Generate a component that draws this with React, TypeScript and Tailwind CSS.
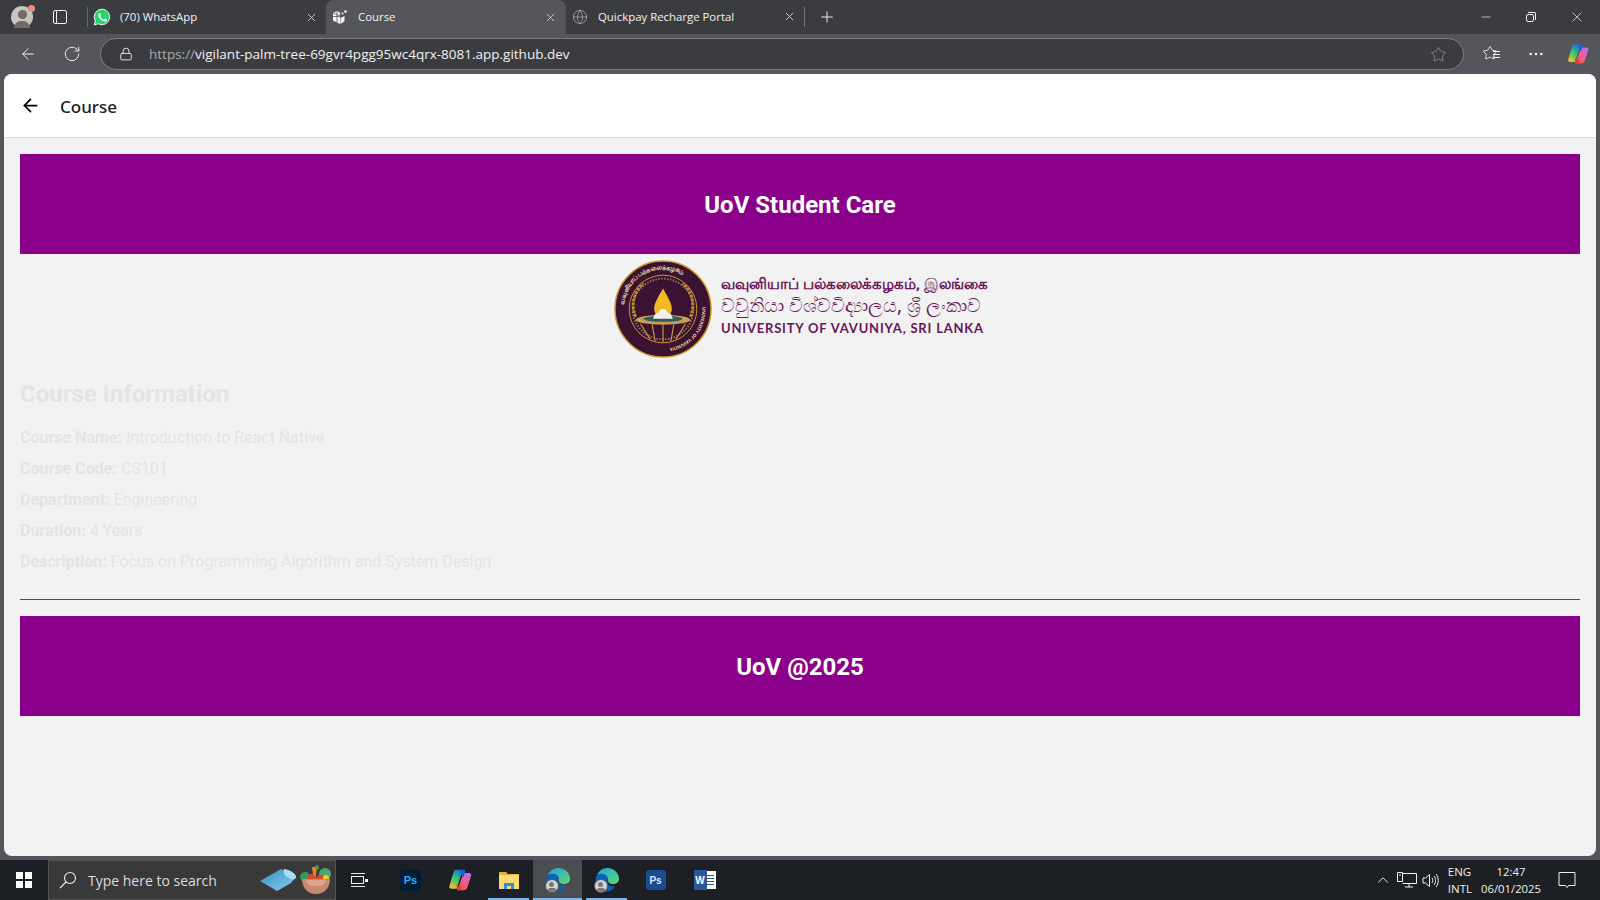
import React from "react";
import { ArrowLeft, RotateCw, Lock, Star, MoreHorizontal, Plus, X, Minus, Globe, ChevronUp } from "lucide-react";

const Segoe = "font-['Open_Sans','Noto_Sans',sans-serif]";

const WhatsAppIcon = () => (
  <svg width="18" height="18" viewBox="0 0 24 24">
    <path d="M12 1.500a10.400 10.400 0 0 0-8.900 15.800L1.600 22.500l5.400-1.400A10.400 10.400 0 1 0 12 1.500z" fill="#25d366" stroke="#fff" strokeWidth="1.200" />
    <path d="M8.600 6.800c-.3 0-.7.1-1 .5-.4.4-1.200 1.200-1.200 2.800s1.200 3.300 1.400 3.500c.2.200 2.400 3.700 5.800 5 2.800 1.100 3.400.9 4 .8.600-.1 2-.8 2.200-1.600.3-.8.300-1.500.2-1.600l-2.600-1.400c-.3-.1-.6-.2-.8.200l-1.100 1.400c-.2.200-.4.300-.8.100-2.100-1-3.500-1.800-4.900-4.200-.2-.4 0-.6.200-.8l.9-1.200c.1-.2.1-.4 0-.6L9.700 7.300c-.3-.5-.6-.5-1.100-.5z" fill="#fff" transform="translate(1.500 1.200) scale(.86)" />
  </svg>
);

const CodespaceIcon = () => (
  <svg width="16" height="16" viewBox="0 0 16 16">
    <path d="M1 4l4-2 3 1.500V15l-3-1.500-4-2z" fill="#f5f5f5" />
    <path d="M5 2v12M1 7.500l7 0M1 4l7 3" stroke="#555" strokeWidth=".8" fill="none" />
    <path d="M8.500 9l4-2v5l-4 3z" fill="#f5f5f5" />
    <circle cx="13.500" cy="2.500" r="1.300" fill="#f5f5f5" />
    <circle cx="10.500" cy="4.500" r="1" fill="#f5f5f5" />
  </svg>
);

const CopilotIcon = ({ size = 24, id }: { size?: number; id: string }) => (
  <svg width={size} height={size} viewBox="0 0 24 24">
    <defs>
      <linearGradient id={`${id}A`} x1="0.700" y1="0" x2="0.200" y2="1">
        <stop offset="0" stopColor="#1b6fe0" />
        <stop offset=".45" stopColor="#35c46a" />
        <stop offset="1" stopColor="#f7c62c" />
      </linearGradient>
      <linearGradient id={`${id}B`} x1="0.800" y1="0" x2="0.200" y2="1">
        <stop offset="0" stopColor="#b86cf0" />
        <stop offset=".55" stopColor="#f0608a" />
        <stop offset="1" stopColor="#f0503c" />
      </linearGradient>
    </defs>
    <path d="M8 2.500h6.500L9 20H4.500Q1.500 20 2.300 17.300L6 5Q6.600 2.500 8 2.500z" fill={`url(#${id}A)`} />
    <path d="M16 5.500h4Q23 5.500 22.200 8.300L18.500 19.500Q17.800 21.500 15.500 21.500H9.500L15 6.500Q15.300 5.500 16 5.500z" fill={`url(#${id}B)`} />
    <path d="M12.500 2.500h3Q17.300 2.500 16.800 4.300L15.300 9.500 13.200 6.500z" fill="#1d5fd6" />
    <path d="M8.800 15.500l2.200 2.500h2.500L12.700 20.500Q12.200 22 10.500 21.700 9 21.400 9 20z" fill="#e83a3a" />
  </svg>
);

const EdgeIcon = ({ id }: { id: string }) => (
  <div className="relative h-[26px] w-[26px]">
    <svg width="26" height="26" viewBox="0 0 26 26">
      <defs>
        <linearGradient id={id} x1="0" y1="0" x2="1" y2="1">
          <stop offset="0" stopColor="#1f9fe0" />
          <stop offset="1" stopColor="#5fdc6e" />
        </linearGradient>
      </defs>
      <path d="M3 8C5 3.500 9 1 13.500 1 20 1 25 6 25 12c0 3.500-3 5-6 5-3.500 0-5-1.500-5-3.500 0-2.500-2-5-5.500-5C6 8.500 4.500 8.500 3 8z" fill={`url(#${id})`} />
      <path d="M3 8c3-2 9-2 10.500 2 1 3-1 5 1 8 1.500 2 5 1.500 7 .5-2 4-6 6.500-10 6-6-.5-10-6-10-11C1.500 11 2 9.500 3 8z" fill="#0c62b0" />
    </svg>
    <div className="absolute bottom-0 left-0 flex h-[14px] w-[14px] flex-col items-center overflow-hidden rounded-full border border-[#555] bg-[#d4d4d4]">
      <div className="mt-[2px] h-[5px] w-[5px] rounded-full bg-[#777]" />
      <div className="mt-[1px] h-[5px] w-[10px] rounded-t-full bg-[#777]" />
    </div>
  </div>
);

const PsIcon = ({ dark }: { dark?: boolean }) => (
  <div
    className={
      dark
        ? "flex h-[21px] w-[21px] items-center justify-center rounded-[3px] bg-[#001d34] font-['Liberation_Sans',sans-serif] text-[11px] font-bold text-[#31a8ff]"
        : "flex h-[20px] w-[20px] items-center justify-center rounded-[2px] bg-[#1c4a8f] font-['Liberation_Sans',sans-serif] text-[10px] font-bold text-[#d8e6f8]"
    }
  >
    Ps
  </div>
);

const FolderIcon = () => (
  <svg width="22" height="20" viewBox="0 0 22 20">
    <path d="M1 2h7l2 2h11v15H1z" fill="#e9ae2c" />
    <path d="M1 5h20v14H1z" fill="#ffdc73" />
    <path d="M6 19v-6h10v6z" fill="#2f8fd8" />
    <path d="M9 19v-3h4v3z" fill="#ffdc73" />
  </svg>
);

const WordIcon = () => (
  <div className="relative flex h-[20px] w-[22px] items-center justify-end">
    <div className="flex h-[18px] w-[14px] flex-col justify-center gap-[2px] bg-white pl-[4px] pr-[2px]">
      <div className="h-[1px] bg-[#2b579a]" />
      <div className="h-[1px] bg-[#2b579a]" />
      <div className="h-[1px] bg-[#2b579a]" />
      <div className="h-[1px] bg-[#2b579a]" />
    </div>
    <div className="absolute left-0 top-0 flex h-[20px] w-[13px] items-center justify-center bg-[#2b579a] font-['Liberation_Sans',sans-serif] text-[10px] font-bold text-white">
      W
    </div>
  </div>
);

const YogaMat = () => (
  <svg width="38" height="24" viewBox="0 0 38 24">
    <defs>
      <linearGradient id="mat" x1="0" y1="0" x2="1" y2="1">
        <stop offset="0" stopColor="#2f8fc4" />
        <stop offset="1" stopColor="#8fd0ee" />
      </linearGradient>
    </defs>
    <path d="M1 13L22 1l15 7-5 7-14 8z" fill="url(#mat)" />
    <path d="M25 1c4 0 12 4 12 8 0 3-4 3-7 1-3-1-7-5-5-9z" fill="#a9dcf2" />
  </svg>
);

const VegBowl = () => (
  <svg width="32" height="30" viewBox="0 0 32 30">
    <circle cx="5" cy="12" r="5" fill="#2f9a5a" />
    <circle cx="25" cy="9" r="6" fill="#4aa86a" />
    <path d="M12 2l5 0-1.500 12h-2z" fill="#e8842c" />
    <path d="M15 1l3-1 1 4-3 1z" fill="#5a9a3a" />
    <circle cx="11" cy="13" r="4" fill="#d9482c" />
    <circle cx="20" cy="14" r="4" fill="#d9482c" />
    <circle cx="26" cy="13" r="3" fill="#f5c629" />
    <path d="M2 14h28c0 9-6 15-14 15S2 23 2 14z" fill="#c78a6e" />
    <path d="M6 15h20c0 4-4 6-10 6S6 19 6 15z" fill="#dba78e" />
  </svg>
);

const NetworkIcon = () => (
  <svg width="20" height="16" viewBox="0 0 20 16" fill="none" stroke="#f0f0f0" strokeWidth="1">
    <path d="M5.500 1.500H19.500V11.500H5.500" />
    <path d="M.5.500H5.500V9.500H.5z" fill="#1c1f23" />
    <path d="M2 3h2M12 11.500V15M8 15h8" />
  </svg>
);

const SpeakerIcon = () => (
  <svg width="17" height="17" viewBox="0 0 17 17" fill="none" stroke="#f0f0f0" strokeWidth="1">
    <path d="M1 6h2.500L7.500 2.500v12L3.500 11H1z" />
    <path d="M10 6c1 1.500 1 3.500 0 5M12 4c2 2.500 2 6.500 0 9M14 2c3 3.500 3 9.500 0 13" />
  </svg>
);

const NotifyIcon = () => (
  <svg width="18" height="18" viewBox="0 0 18 18" fill="none" stroke="#f0f0f0" strokeWidth="1">
    <path d="M1 1.500h16v13h-6.500L9 16.500l-1.500-2H1z" />
  </svg>
);

const UovLogo = () => (
  <svg width="100" height="98" viewBox="0 0 100 100">
    <defs>
      <path id="rimTop" d="M10 46A40 40 0 0 1 84 29" />
      <path id="rimRight" d="M90 48A40 40 0 0 1 30 85" />
    </defs>
    <circle cx="50" cy="50" r="49" fill="#3c1232" stroke="#c99a2e" strokeWidth="1.500" />
    <circle cx="50" cy="50" r="34.500" fill="none" stroke="#c99a2e" strokeWidth="1" />
    <circle cx="50" cy="50" r="31" fill="none" stroke="#d9c48a" strokeWidth="2" strokeDasharray="1.500 1.500" opacity=".55" />
    <text fontSize="6.500" fontWeight="700" fill="#e9d9a8" fontFamily="Noto Sans, sans-serif">
      <textPath href="#rimTop">வவுனியாப் பல்கலைக்கழகம்</textPath>
    </text>
    <text fontSize="4.500" fontWeight="700" fill="#e9d9a8" fontFamily="Noto Sans, sans-serif">
      <textPath href="#rimRight">UNIVERSITY OF VAVUNIYA</textPath>
    </text>
    <path d="M22 58c-5-12-2-26 8-34M78 58c5-12 2-26-8-34" fill="none" stroke="#b88a3a" strokeWidth="3" strokeDasharray="3 1" />
    <path d="M50 29c5 9 9 15 9 21 0 5-4 8-9 8s-9-3-9-8c0-6 4-12 9-21z" fill="#f2b926" />
    <ellipse cx="50" cy="61" rx="28" ry="5" fill="#c9a14e" />
    <ellipse cx="50" cy="60" rx="20" ry="3" fill="#2f5a68" />
    <path d="M40 60c1-5 3-6 5-6 1-3 3-4 5-4s4 1 5 4c2 0 4 1 5 6z" fill="#f4f1ec" />
    <path d="M27 65l10 16M39 66l3 17M50 66v18M61 66l-3 17M73 65L63 81" stroke="#c99a2e" strokeWidth="1.200" fill="none" />
  </svg>
);

const TabClose = () => <X size={13} strokeWidth={1.500} className="text-[#e4e4e4]" />;

const Info = ({ label, value }: { label: string; value: string }) => (
  <p className="mb-3 h-[19px] text-[16px] leading-[19px] text-[#e6e3e7]">
    <span className="font-bold">{label}</span> {value}
  </p>
);

const TaskSlot = ({ children, open, active }: { children: React.ReactNode; open?: boolean; active?: boolean }) => (
  <div className={`relative flex h-[40px] w-[49px] items-center justify-center ${active ? "bg-[#4a4d52]" : ""}`}>
    {children}
    {open && (
      <div className={`absolute bottom-0 h-[2px] bg-[#76b9ed] ${active ? "inset-x-0" : "inset-x-[4px]"}`} />
    )}
  </div>
);

export default function App() {
  return (
    <div className={`flex h-[900px] w-[1600px] flex-col overflow-hidden bg-[#55565b] ${Segoe}`}>
      {/* tab strip */}
      <div className="flex h-[34px] items-center bg-[#3b3c40] text-[11.400px] text-[#f2f2f2]">
        <div className="relative ml-[11px] flex h-[22px] w-[22px] items-end justify-center rounded-full bg-[#c8c4bf]">
          <div className="absolute top-[4px] h-[9px] w-[9px] rounded-full bg-[#6d6a68]" />
          <div className="h-[7px] w-[16px] rounded-t-full bg-[#6d6a68]" />
          <div className="absolute -right-[2px] -top-[1px] h-[7px] w-[7px] rounded-full bg-[#f08a8a]" />
        </div>
        <div className="ml-[20px] flex h-[14px] w-[14px] rounded-[2px] border-[1.500px] border-[#f0f0f0]">
          <div className="w-[3px] border-r border-[#f0f0f0]" />
        </div>
        <div className="ml-[20px] h-[20px] w-px bg-[#666]" />
        <div className="flex w-[238px] items-center pl-[5px] pr-[8px]">
          <WhatsAppIcon />
          <span className="ml-[9px] flex-1">(70) WhatsApp</span>
          <TabClose />
        </div>
        <div className="flex h-[34px] w-[240px] items-center rounded-t-[8px] bg-[#55565b] pl-[6px] pr-[9px]">
          <CodespaceIcon />
          <span className="ml-[10px] flex-1">Course</span>
          <TabClose />
        </div>
        <div className="flex w-[238px] items-center pl-[6px] pr-[8px]">
          <Globe size={16} strokeWidth={1} className="text-[#b8b8b8]" />
          <span className="ml-[10px] flex-1">Quickpay Recharge Portal</span>
          <TabClose />
        </div>
        <div className="h-[20px] w-px bg-[#777]" />
        <Plus size={18} strokeWidth={1.300} className="ml-[13px] text-[#f0f0f0]" />
        <div className="ml-auto flex items-center gap-[33px] pr-[15px] text-[#f0f0f0]">
          <Minus size={14} strokeWidth={1.200} />
          <div className="relative h-[10px] w-[10px]">
            <div className="absolute bottom-0 left-0 h-[8px] w-[8px] rounded-[2px] border border-[#f0f0f0]" />
            <div className="absolute right-0 top-0 h-[8px] w-[8px] rounded-tr-[2px] border-r border-t border-[#f0f0f0]" />
          </div>
          <X size={16} strokeWidth={1.100} />
        </div>
      </div>

      {/* toolbar */}
      <div className="flex h-[40px] items-center bg-[#55565b] text-[#f0f0f0]">
        <ArrowLeft size={18} strokeWidth={1.300} className="ml-[19px]" />
        <RotateCw size={18} strokeWidth={1.300} className="ml-[26px]" />
        <div className="ml-[19px] flex h-[32px] w-[1364px] items-center rounded-full border border-[#7b7c80] bg-[#3b3c40] pl-[18px] pr-[16px]">
          <Lock size={14} strokeWidth={1.500} />
          <span className="ml-[16px] flex-1 text-[13.500px]">
            <span className="text-[#a9aaad]">https://</span>vigilant-palm-tree-69gvr4pgg95wc4qrx-8081.app.github.dev
          </span>
          <Star size={17} strokeWidth={1.200} className="text-[#8d8e91]" />
        </div>
        <div className="relative ml-[18px] h-[18px] w-[18px]">
          <Star size={16} strokeWidth={1.300} />
          <div className="absolute right-0 top-[6px] flex w-[7px] flex-col gap-[2px]">
            <div className="h-px bg-[#f0f0f0]" />
            <div className="h-px bg-[#f0f0f0]" />
            <div className="h-px bg-[#f0f0f0]" />
          </div>
        </div>
        <MoreHorizontal size={18} strokeWidth={1.500} className="ml-[27px]" />
        <div className="ml-[21px]">
          <CopilotIcon id="cpTool" />
        </div>
      </div>

      {/* web page */}
      <div className="mx-[4px] flex h-[782px] flex-col overflow-hidden rounded-[8px] bg-[#f2f2f2]">
        <div className="flex h-[64px] items-center border-b border-[#d8d8d8] bg-white pl-[16px]">
          <ArrowLeft size={21} strokeWidth={2} className="text-black" />
          <span className="ml-[19px] mt-[2px] text-[17px] font-medium text-[#1c1c1c] font-['Noto_Sans',sans-serif]">Course</span>
        </div>
        <div className="flex flex-col px-[16px] pt-[16px] font-['Roboto',sans-serif]">
          <div className="flex h-[100px] items-center justify-center bg-[#8b008b] pt-[2px] text-[24px] font-bold text-white">
            UoV Student Care
          </div>
          <div className="flex h-[108px] items-center justify-center gap-[8px] pt-[2px]">
            <UovLogo />
            <div className="-mt-[6px] flex w-[266px] flex-col whitespace-nowrap font-['Noto_Sans','Liberation_Sans',sans-serif] text-[#6b1458]">
              <span className="text-[15px] font-bold leading-[21px]">வவுனியாப் பல்கலைக்கழகம், இலங்கை</span>
              <span className="text-[19.300px] leading-[21px]">වවුනියා විශ්වවිද්‍යාලය, ශ්‍රී ලංකාව</span>
              <span className="mt-[2px] font-['Lato',sans-serif] text-[13px] font-bold leading-[22px] tracking-[0.8px]">UNIVERSITY OF VAVUNIYA, SRI LANKA</span>
            </div>
          </div>
          <h2 className="mb-[20px] mt-[18px] h-[28px] text-[24px] font-bold leading-[28px] text-[#e6e3e7]">Course Information</h2>
          <Info label="Course Name:" value="Introduction to React Native" />
          <Info label="Course Code:" value="CS101" />
          <Info label="Department:" value="Engineering" />
          <Info label="Duration:" value="4 Years" />
          <Info label="Description:" value="Focus on Programming Algorithm and System Design" />
          <div className="mt-[16px] h-px bg-[#4c4c50]" />
          <div className="mt-[16px] flex h-[100px] items-center justify-center bg-[#8b008b] pt-[1px] text-[24px] font-bold text-white">
            UoV @2025
          </div>
        </div>
      </div>

      {/* taskbar */}
      <div className="mt-[4px] flex h-[40px] flex-1 items-center bg-[#1c1f23] text-[#f0f0f0]">
        <div className="ml-[16px] grid h-[16px] w-[16px] grid-cols-2 gap-[1.500px]">
          <div className="bg-white" />
          <div className="bg-white" />
          <div className="bg-white" />
          <div className="bg-white" />
        </div>
        <div className="relative ml-[16px] flex h-[40px] w-[288px] flex-none items-center border border-[#555] bg-[#393939] pl-[10px]">
          <svg width="18" height="18" viewBox="0 0 18 18" fill="none" stroke="#f0f0f0" strokeWidth="1.100">
            <circle cx="11" cy="7" r="5.500" />
            <path d="M7 11l-6 6" />
          </svg>
          <span className="ml-[11px] text-[14px] text-[#dcdcdc]">Type here to search</span>
          <div className="absolute right-[3px] top-[4px] flex items-center gap-[3px]">
            <YogaMat />
            <VegBowl />
          </div>
        </div>
        <div className="ml-[15px] flex w-[18px] flex-col gap-[2px]">
          <div className="h-px w-[14px] bg-[#f0f0f0]" />
          <div className="flex items-center gap-[1px]">
            <div className="h-[8px] w-[13px] border border-[#f0f0f0]" />
            <div className="h-[3px] w-[3px] bg-[#f0f0f0]" />
          </div>
          <div className="h-px w-[14px] bg-[#f0f0f0]" />
        </div>
        <div className="ml-[17px] flex items-center">
          <TaskSlot><PsIcon dark /></TaskSlot>
          <TaskSlot><CopilotIcon size={26} id="cpTask" /></TaskSlot>
          <TaskSlot open><FolderIcon /></TaskSlot>
          <TaskSlot open active><EdgeIcon id="edOne" /></TaskSlot>
          <TaskSlot open><EdgeIcon id="edTwo" /></TaskSlot>
          <TaskSlot><PsIcon /></TaskSlot>
          <TaskSlot><WordIcon /></TaskSlot>
        </div>
        <div className="ml-auto flex items-center pr-[24px] text-[11.500px]">
          <ChevronUp size={18} strokeWidth={1.300} />
          <div className="ml-[5px]"><NetworkIcon /></div>
          <div className="ml-[5px]"><SpeakerIcon /></div>
          <div className="ml-[9px] flex flex-col leading-[17px]">
            <span>ENG</span>
            <span>INTL</span>
          </div>
          <div className="ml-[9px] flex flex-col items-center text-[11.300px] leading-[17px]">
            <span>12:47</span>
            <span>06/01/2025</span>
          </div>
          <div className="ml-[17px]"><NotifyIcon /></div>
        </div>
      </div>
    </div>
  );
}
